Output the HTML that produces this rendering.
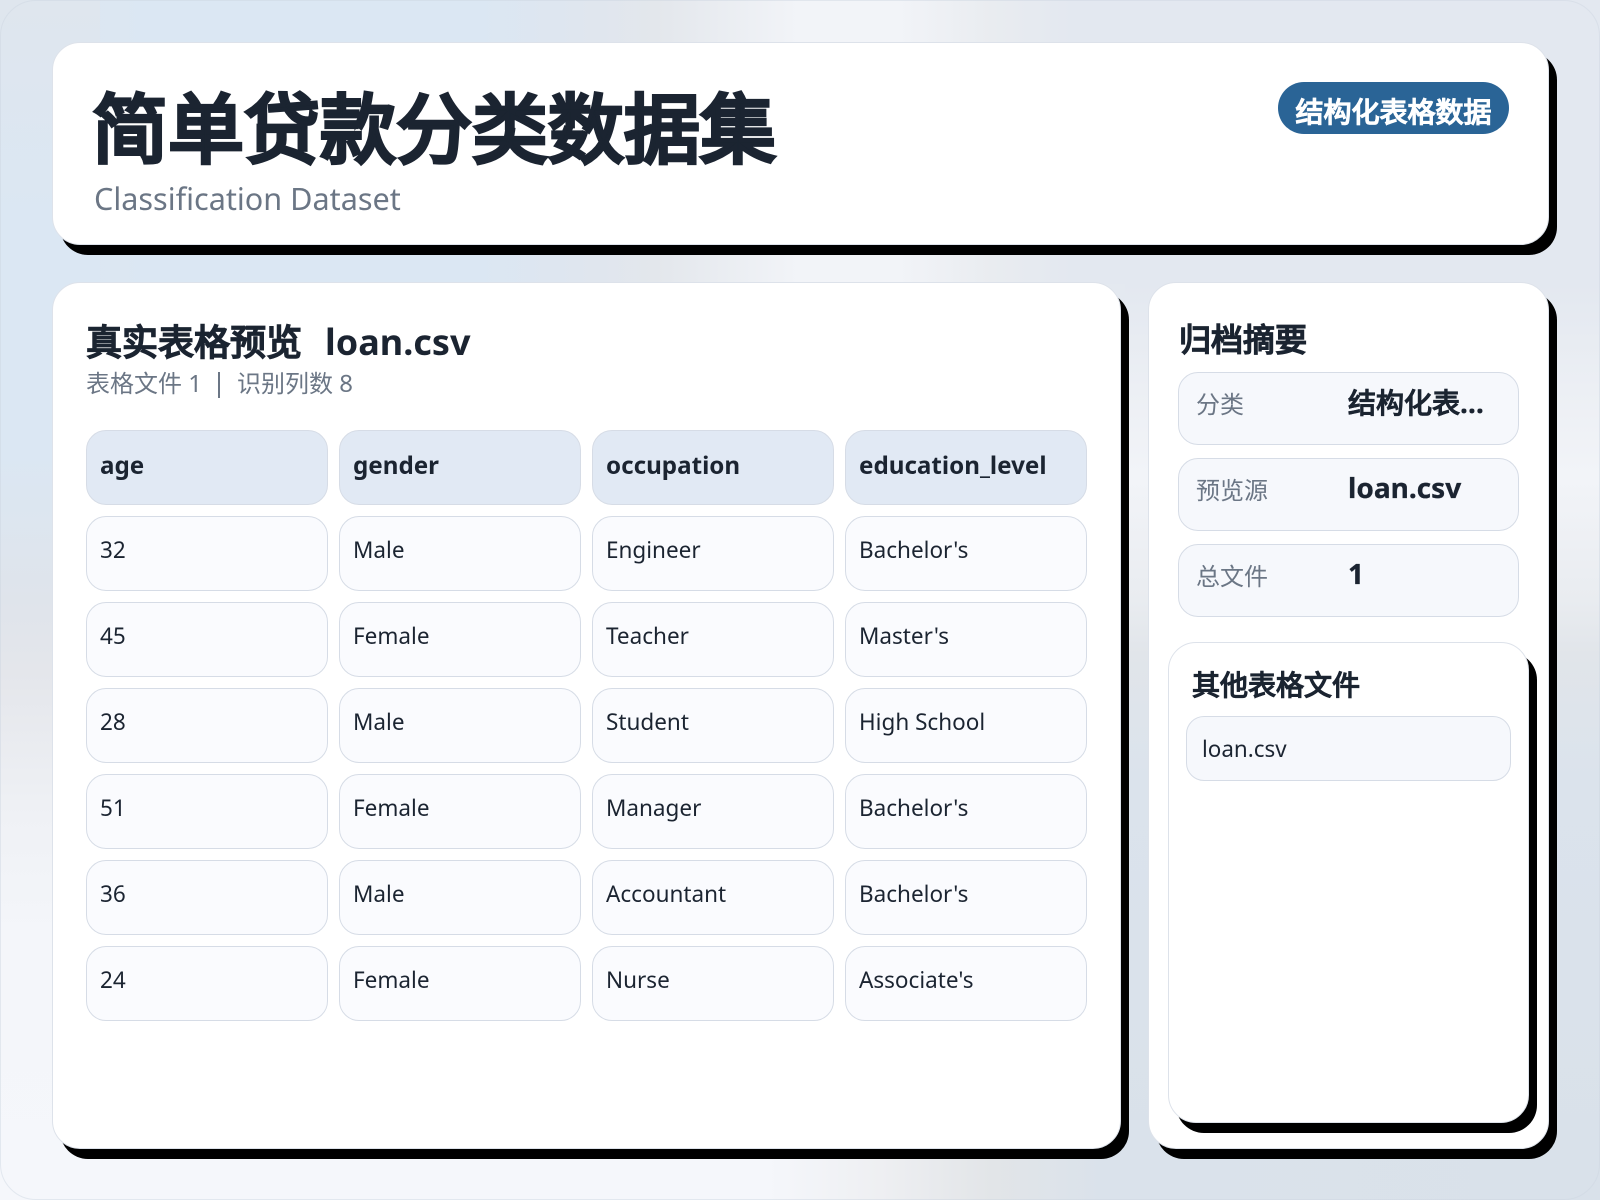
<!DOCTYPE html>
<html lang="zh"><head><meta charset="utf-8"><title>简单贷款分类数据集</title>
<style>
*{box-sizing:border-box;margin:0;padding:0}
html,body{width:1600px;height:1200px;overflow:hidden;background:#e4e9f0}
body{position:relative;font-family:"Noto Sans",sans-serif;color:#1b2431}
.bg{position:absolute}
.frame{position:absolute;left:0;top:0;width:1600px;height:1200px;border:1px solid rgba(205,213,224,.45);border-radius:36px}
.card{position:absolute;background:#fff;border:1px solid #dde2ea;border-radius:28px;box-shadow:8px 10px 0 #000}
.box{position:absolute;border:1px solid #d6dce6;border-radius:20px;background:#f6f8fc}
.h{background:#e1e9f4}
.c{background:#fafbfe}
.t{position:absolute;white-space:nowrap}
.th{font-size:24.2px;font-weight:700;line-height:36px}
.td{font-size:22.5px;line-height:32px}
.lb{font-size:24px;color:#6b7685;line-height:34px}
.val{font-size:28px;font-weight:700;line-height:40px;-webkit-text-stroke:.3px #1b2431}
</style></head><body>
<div class="bg" style="left:0;top:0;width:1600px;height:284px;background:linear-gradient(90deg,#dfe6ee 0,#dbe7f3 9%,#dbe7f3 30%,#dfe6ef 36%,#e3e7ec 41%,#f2f4f8 50%,#f2f4f8 56%,#e9ecf0 62%,#e3e8f0 67%,#e3e8f0 100%)"></div>
<div class="bg" style="left:0;top:0;width:100px;height:1200px;background:linear-gradient(180deg,#dfe6ee 0,#dbe7f3 18%,#dbe7f3 38%,#dfe4eb 50%,#e4e6eb 56%,#eff1f5 68%,#f4f6fa 78%,#f5f7fb 100%)"></div>
<div class="bg" style="left:1125px;top:284px;width:475px;height:880px;background:linear-gradient(180deg,#e3e8f0 0,#eceff4 12%,#f2f4f8 22%,#e9ecf0 36%,#e1e5ea 42%,#dbe3ec 56%,#d9e1ea 100%)"></div>
<div class="bg" style="left:0;top:1120px;width:1600px;height:80px;background:linear-gradient(90deg,#f5f7fb 0,#f5f7fb 48%,#eeeff2 55%,#e2e5e8 62%,#dae2eb 69%,#d9e1ea 100%)"></div>
<div class="frame"></div>

<div class="card" style="left:52px;top:42px;width:1497px;height:203px"></div>
<div class="t" style="left:92px;top:79px;font-size:76px;font-weight:900;line-height:100px;-webkit-text-stroke:1.8px #1b2431">简单贷款分类数据集</div>
<div class="t" style="left:94px;top:175px;font-size:30.6px;line-height:46px;color:#6b7685">Classification Dataset</div>
<div class="t" style="left:1278px;top:82px;width:231px;height:52px;border-radius:26px;background:#2a6496;color:#fff;font-size:28px;font-weight:700;line-height:60px;text-align:center;-webkit-text-stroke:.4px #fff">结构化表格数据</div>

<div class="card" style="left:52px;top:282px;width:1069px;height:867px"></div>
<div class="t" style="left:86px;top:316px;font-size:36px;font-weight:700;line-height:52px;-webkit-text-stroke:.7px #1b2431">真实表格预览</div>
<div class="t" style="left:325px;top:316px;font-size:36px;font-weight:700;line-height:52px">loan.csv</div>
<div class="t" style="left:86px;top:367px;font-size:24px;line-height:34px;color:#6b7685">表格文件 1</div>
<div class="t" style="left:218px;top:372px;width:2px;height:26px;background:#6b7685"></div>
<div class="t" style="left:237px;top:367px;font-size:24px;line-height:34px;color:#6b7685">识别列数 8</div>

<div class="box h" style="left:86px;top:430px;width:242px;height:75px"></div>
<div class="box h" style="left:339px;top:430px;width:242px;height:75px"></div>
<div class="box h" style="left:592px;top:430px;width:242px;height:75px"></div>
<div class="box h" style="left:845px;top:430px;width:242px;height:75px"></div>
<div class="t th" style="left:100px;top:448px">age</div>
<div class="t th" style="left:353px;top:448px">gender</div>
<div class="t th" style="left:606px;top:448px">occupation</div>
<div class="t th" style="left:859px;top:448px">education_level</div>

<div class="box c" style="left:86px;top:516px;width:242px;height:75px"></div>
<div class="box c" style="left:339px;top:516px;width:242px;height:75px"></div>
<div class="box c" style="left:592px;top:516px;width:242px;height:75px"></div>
<div class="box c" style="left:845px;top:516px;width:242px;height:75px"></div>
<div class="t td" style="left:100px;top:534px">32</div>
<div class="t td" style="left:353px;top:534px">Male</div>
<div class="t td" style="left:606px;top:534px">Engineer</div>
<div class="t td" style="left:859px;top:534px">Bachelor's</div>

<div class="box c" style="left:86px;top:602px;width:242px;height:75px"></div>
<div class="box c" style="left:339px;top:602px;width:242px;height:75px"></div>
<div class="box c" style="left:592px;top:602px;width:242px;height:75px"></div>
<div class="box c" style="left:845px;top:602px;width:242px;height:75px"></div>
<div class="t td" style="left:100px;top:620px">45</div>
<div class="t td" style="left:353px;top:620px">Female</div>
<div class="t td" style="left:606px;top:620px">Teacher</div>
<div class="t td" style="left:859px;top:620px">Master's</div>

<div class="box c" style="left:86px;top:688px;width:242px;height:75px"></div>
<div class="box c" style="left:339px;top:688px;width:242px;height:75px"></div>
<div class="box c" style="left:592px;top:688px;width:242px;height:75px"></div>
<div class="box c" style="left:845px;top:688px;width:242px;height:75px"></div>
<div class="t td" style="left:100px;top:706px">28</div>
<div class="t td" style="left:353px;top:706px">Male</div>
<div class="t td" style="left:606px;top:706px">Student</div>
<div class="t td" style="left:859px;top:706px">High School</div>

<div class="box c" style="left:86px;top:774px;width:242px;height:75px"></div>
<div class="box c" style="left:339px;top:774px;width:242px;height:75px"></div>
<div class="box c" style="left:592px;top:774px;width:242px;height:75px"></div>
<div class="box c" style="left:845px;top:774px;width:242px;height:75px"></div>
<div class="t td" style="left:100px;top:792px">51</div>
<div class="t td" style="left:353px;top:792px">Female</div>
<div class="t td" style="left:606px;top:792px">Manager</div>
<div class="t td" style="left:859px;top:792px">Bachelor's</div>

<div class="box c" style="left:86px;top:860px;width:242px;height:75px"></div>
<div class="box c" style="left:339px;top:860px;width:242px;height:75px"></div>
<div class="box c" style="left:592px;top:860px;width:242px;height:75px"></div>
<div class="box c" style="left:845px;top:860px;width:242px;height:75px"></div>
<div class="t td" style="left:100px;top:878px">36</div>
<div class="t td" style="left:353px;top:878px">Male</div>
<div class="t td" style="left:606px;top:878px">Accountant</div>
<div class="t td" style="left:859px;top:878px">Bachelor's</div>

<div class="box c" style="left:86px;top:946px;width:242px;height:75px"></div>
<div class="box c" style="left:339px;top:946px;width:242px;height:75px"></div>
<div class="box c" style="left:592px;top:946px;width:242px;height:75px"></div>
<div class="box c" style="left:845px;top:946px;width:242px;height:75px"></div>
<div class="t td" style="left:100px;top:964px">24</div>
<div class="t td" style="left:353px;top:964px">Female</div>
<div class="t td" style="left:606px;top:964px">Nurse</div>
<div class="t td" style="left:859px;top:964px">Associate's</div>

<div class="card" style="left:1148px;top:282px;width:401px;height:867px"></div>
<div class="t" style="left:1179px;top:317px;font-size:32px;font-weight:700;line-height:46px;-webkit-text-stroke:.6px #1b2431">归档摘要</div>

<div class="box" style="left:1178px;top:372px;width:341px;height:73px"></div>
<div class="t lb" style="left:1196px;top:388px">分类</div>
<div class="t val" style="left:1348px;top:383px;width:146px;overflow:hidden;text-overflow:ellipsis">结构化表格数据</div>

<div class="box" style="left:1178px;top:458px;width:341px;height:73px"></div>
<div class="t lb" style="left:1196px;top:474px">预览源</div>
<div class="t val" style="left:1348px;top:468px">loan.csv</div>

<div class="box" style="left:1178px;top:544px;width:341px;height:73px"></div>
<div class="t lb" style="left:1196px;top:560px">总文件</div>
<div class="t val" style="left:1348px;top:554px">1</div>

<div class="card" style="left:1168px;top:642px;width:361px;height:481px"></div>
<div class="t" style="left:1192px;top:665px;font-size:28px;font-weight:700;line-height:40px;-webkit-text-stroke:.3px #1b2431">其他表格文件</div>
<div class="box" style="left:1186px;top:716px;width:325px;height:65px;border-radius:18px"></div>
<div class="t" style="left:1202px;top:733px;font-size:22.4px;line-height:32px">loan.csv</div>
</body></html>
